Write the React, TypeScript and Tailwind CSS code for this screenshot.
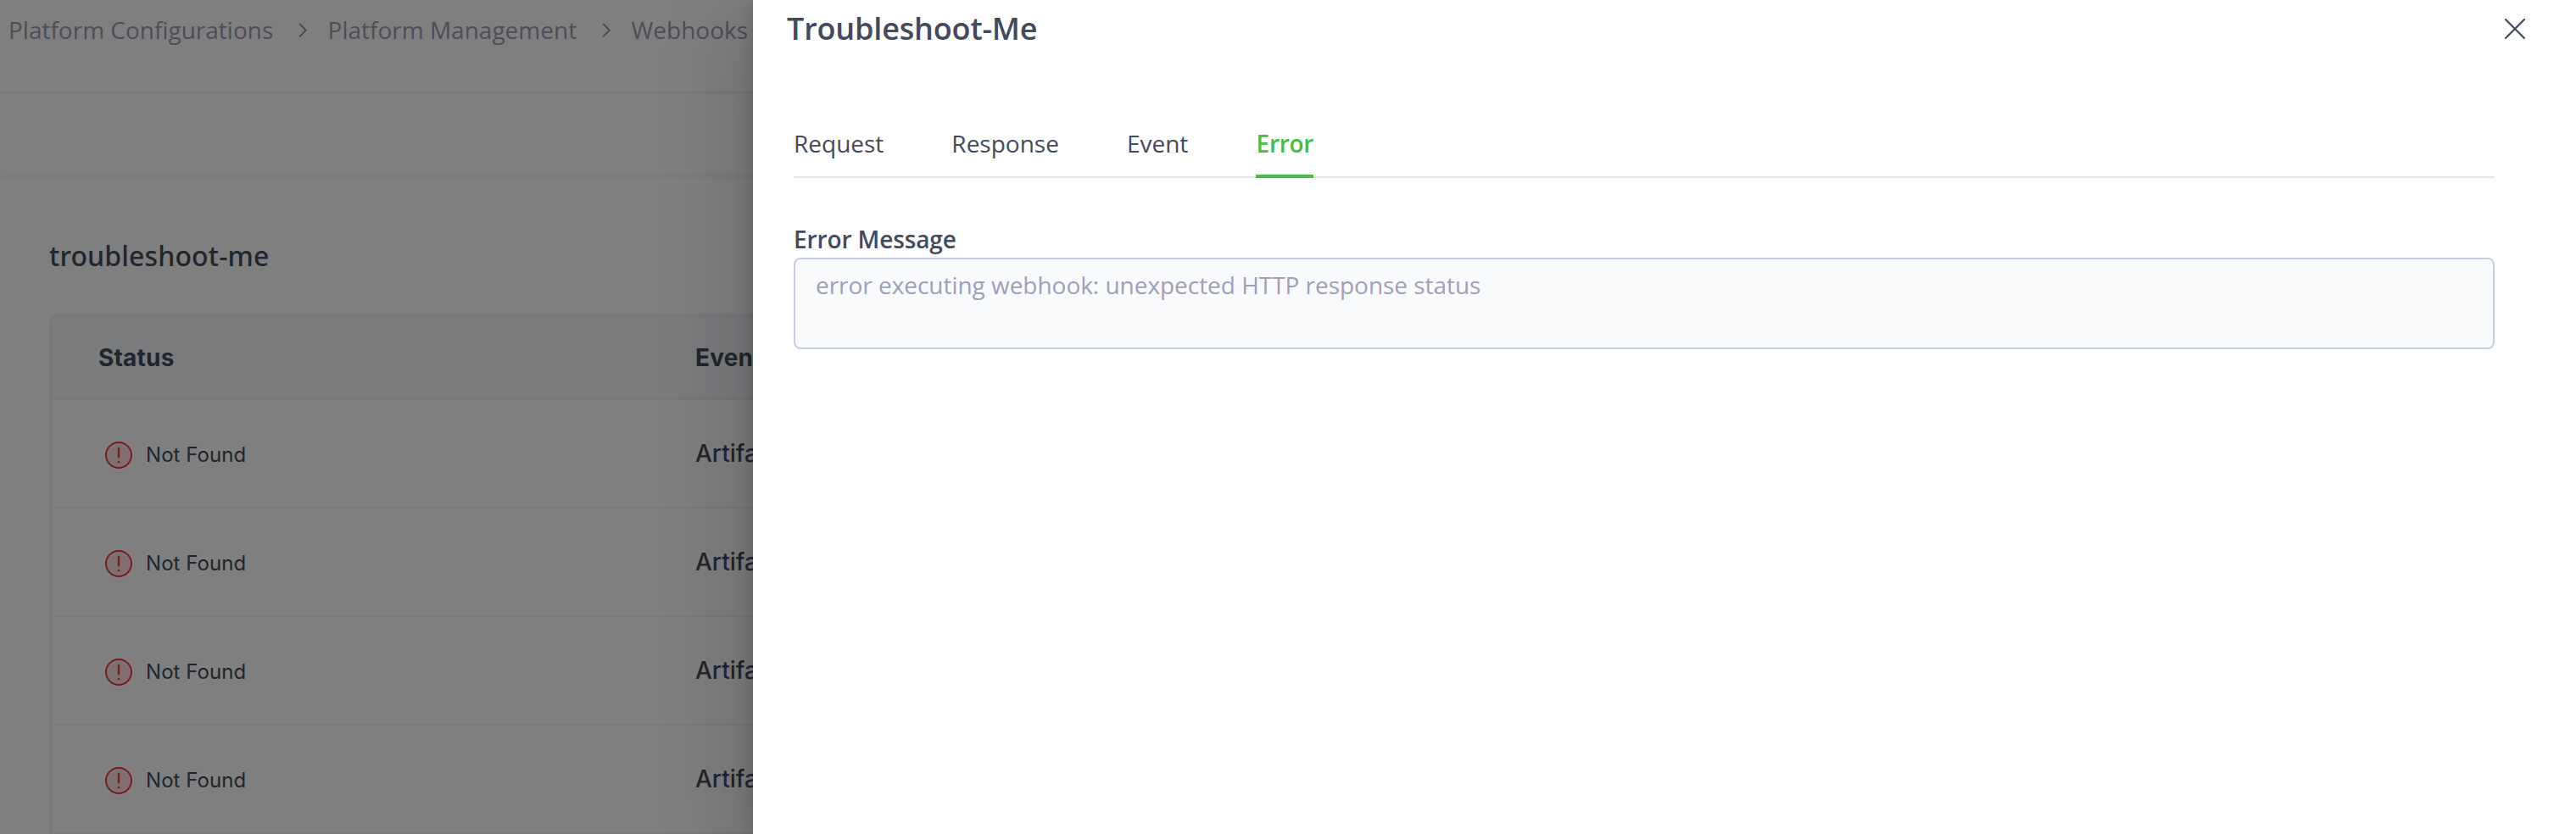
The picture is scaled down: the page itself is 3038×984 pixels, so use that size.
import React from 'react';

const CRUMBS = ['Platform Configurations', 'Platform Management', 'Webhooks'];
const TABS = ['Request', 'Response', 'Event', 'Error'];
const ROWS = [1, 2, 3, 4];

const ChevronIcon: React.FC = () => (
  <svg className="ml-[30px] mr-[24.3px] mt-[2px] h-[18px] w-[10px]" viewBox="0 0 10 18" fill="none" stroke="#8d8da5" strokeWidth="2" strokeLinecap="round" strokeLinejoin="round" aria-hidden="true">
    <path d="M1.8 1.6l7 7-7 7" />
  </svg>
);

const ErrorIcon: React.FC = () => (
  <svg className="h-8 w-8" viewBox="0 0 32 32" fill="none" aria-hidden="true">
    <circle cx="16" cy="16" r="15" fill="#ff3b3b" fillOpacity="0.14" stroke="#f0383f" strokeWidth="2" />
    <path d="M16 8.2v10" stroke="#f0383f" strokeWidth="2.4" strokeLinecap="round" />
    <circle cx="16" cy="24" r="1.3" fill="#f0383f" />
  </svg>
);

const CloseIcon: React.FC = () => (
  <svg className="h-6 w-6" viewBox="0 0 24 24" fill="none" stroke="#434a5c" strokeWidth="2.2" strokeLinecap="round" aria-hidden="true">
    <path d="M1 1l22 22M23 1L1 23" />
  </svg>
);

/** Webhook execution list that sits behind the drawer. */
const ExecutionsPage: React.FC = () => (
  <div className="flex h-full w-full flex-col bg-white">
    <nav className="flex h-[110px] shrink-0 items-start border-b-2 border-[#eeeefa] pl-[10px] pt-4 font-['Open_Sans',sans-serif] text-[28px] leading-[38px] text-[#9a9ab4]" aria-label="Breadcrumb">
      {CRUMBS.map((crumb, index) => (
        <div key={crumb} className="flex items-center whitespace-nowrap">
          {index > 0 && <ChevronIcon />}
          <span>{crumb}</span>
        </div>
      ))}
    </nav>
    <div className="h-[100px] shrink-0" />
    <main className="flex grow flex-col bg-white pl-[58px] shadow-[0_0_12px_rgba(0,0,0,0.08)]">
      <h1 className="mt-[70px] h-[90px] font-['Noto_Sans',sans-serif] text-[32px] font-medium leading-[44px] tracking-[0.13px] text-[#434a5c]">troubleshoot-me</h1>
      <div className="grow rounded-tl-[10px] border-l-4 border-t-4 border-[#f1f1f4] font-['Inter',sans-serif] text-[#434a5c]">
        <div className="flex h-[98px] items-center rounded-tl-[4px] border-b-2 border-[#efeff3] bg-[#f5f7fa] pl-[54px] text-[28px] font-bold tracking-[0.2px]">
          <span className="w-[704px]">Status</span>
          <span>Event</span>
        </div>
        {ROWS.map((row) => (
          <div key={row} className="flex h-32 items-center border-b-2 border-[#f3f3f6] pl-[62px]">
            <div className="flex w-[696px] items-center gap-4 pt-[3px] text-[24px] font-[430] tracking-[0.05px]">
              <ErrorIcon />
              <span>Not Found</span>
            </div>
            <span className="text-[28px] font-[450]">Artifact</span>
          </div>
        ))}
      </div>
    </main>
  </div>
);

/** Details of one execution, opened on the Error tab. */
const TroubleshootDrawer: React.FC = () => (
  <aside className="absolute inset-y-0 right-0 flex w-[2150px] flex-col bg-white font-['Open_Sans',sans-serif] text-[#434a5c] shadow-[0_8px_16px_rgba(16,22,26,0.2),0_36px_92px_12px_rgba(16,22,26,0.2)]" role="dialog" aria-label="Troubleshoot-Me">
    <header className="flex items-start justify-between pl-10 pr-[60px]">
      <h2 className="mt-[9px] text-[36px] font-semibold leading-[50px] tracking-[-0.17px]">Troubleshoot-Me</h2>
      <button className="mt-[22px]" aria-label="Close">
        <CloseIcon />
      </button>
    </header>
    <div className="ml-12 mr-[96px] flex flex-col">
      <div className="mt-[79px] flex h-[72px] items-start gap-[80px] border-b-2 border-[#e2e6ec] text-[28px] leading-[62px]" role="tablist">
        {TABS.map((tab) => (
          <button
            key={tab}
            role="tab"
            aria-selected={tab === 'Error'}
            className={
              tab === 'Error'
                ? 'h-[72px] w-[68px] border-b-4 border-[#42be44] pb-[6px] font-semibold tracking-[-0.3px] text-[#42be44]'
                : 'h-[72px] pb-[10px]'
            }
          >
            {tab}
          </button>
        ))}
      </div>
      <label className="mb-[2px] mt-[52px] text-[28px] font-semibold leading-[40px] tracking-[-0.12px]">Error Message</label>
      <div className="h-[108px] rounded-lg border-2 border-[#c8cde4] bg-[#f9fafc] px-6 pt-[10px] text-[28px] leading-[40px] tracking-[-0.035px] text-[#9f9fb9]">
        error executing webhook: unexpected HTTP response status
      </div>
    </div>
  </aside>
);

export default function App() {
  return (
    <div className="relative h-[984px] w-[3038px] overflow-hidden">
      <ExecutionsPage />
      <div className="absolute inset-0 bg-black/50" />
      <TroubleshootDrawer />
    </div>
  );
}
